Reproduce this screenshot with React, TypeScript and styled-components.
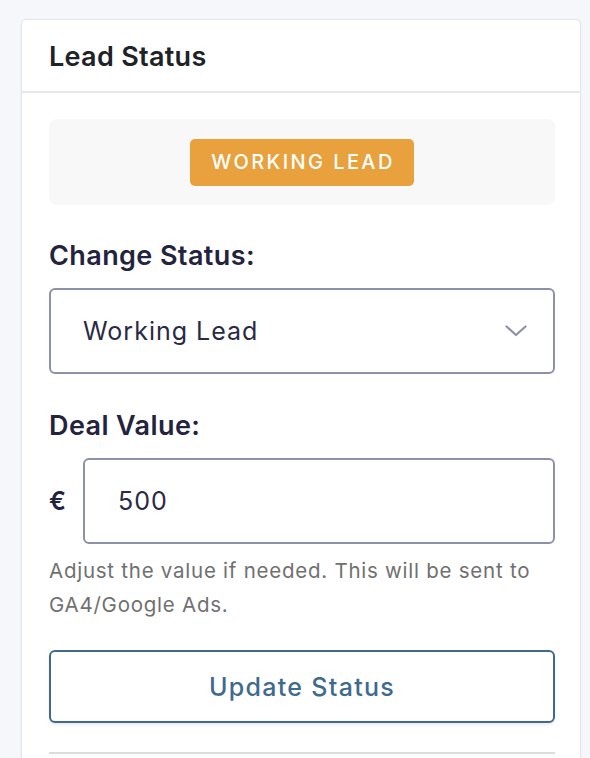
import styled, { createGlobalStyle } from "styled-components";

const GlobalStyle = createGlobalStyle`
  html, body {
    margin: 0;
    padding: 0;
    background: #f6f7fb;
    font-family: Inter, "Noto Sans", "Liberation Sans", sans-serif;
  }
`;

const Page = styled.div`
  padding: 19px 9px 0 21px;
  height: 758px;
  box-sizing: border-box;
  overflow: hidden;
`;

const Card = styled.div`
  background: #ffffff;
  border: 1px solid #e3e4ec;
  border-radius: 5px;
  box-shadow: 0 0 2px rgba(40, 44, 80, 0.06);
`;

const CardHeader = styled.div`
  height: 73px;
  display: flex;
  align-items: center;
  padding: 2px 27px 0;
  box-sizing: border-box;
  border-bottom: 2px solid #e8e9ef;
`;

const Title = styled.h2`
  margin: 0;
  font-size: 27px;
  font-weight: 600;
  color: #1d2327;
  letter-spacing: 0.3px;
`;

const CardBody = styled.div`
  padding: 26px 25px 40px 27px;
  display: flex;
  flex-direction: column;
`;

const StatusBox = styled.div`
  height: 86px;
  background: #f8f8f8;
  border-radius: 8px;
  display: flex;
  align-items: center;
  justify-content: center;
`;

const Badge = styled.span`
  display: inline-flex;
  align-items: center;
  height: 47px;
  padding: 0 19px 0 21px;
  border-radius: 5px;
  background: #e8a13c;
  color: #ffffff;
  font-size: 20px;
  font-weight: 500;
  letter-spacing: 2.4px;
  text-transform: uppercase;
`;

const Label = styled.label<{ $top: number }>`
  display: block;
  margin-top: ${(p) => p.$top}px;
  margin-bottom: 16px;
  font-size: 27px;
  line-height: 32px;
  font-weight: 600;
  color: #23233f;
  letter-spacing: 0.4px;
`;

const SelectBox = styled.div`
  height: 86px;
  box-sizing: border-box;
  border: 2px solid #8e90ab;
  border-radius: 6px;
  display: flex;
  align-items: center;
  justify-content: space-between;
  padding: 0 26px 0 32px;
  font-size: 25px;
  letter-spacing: 1px;
  color: #2a2a45;
`;

const InputRow = styled.div`
  display: flex;
  align-items: center;
  gap: 18px;
`;

const Currency = styled.span`
  width: 16px;
  font-size: 25px;
  font-weight: 600;
  color: #23233f;
`;

const ValueInput = styled.div`
  flex: 1;
  height: 86px;
  box-sizing: border-box;
  border: 2px solid #8e90ab;
  border-radius: 6px;
  display: flex;
  align-items: center;
  padding: 0 33px;
  font-size: 25px;
  letter-spacing: 1px;
  color: #2a2a45;
`;

const Help = styled.p`
  margin: 10px 0 0;
  font-size: 20.5px;
  line-height: 34px;
  letter-spacing: 0.75px;
  color: #707070;
`;

const UpdateButton = styled.button`
  margin-top: 28px;
  height: 73px;
  width: 100%;
  background: #ffffff;
  border: 2px solid #3f6a8f;
  border-radius: 6px;
  box-shadow: 0 2px 3px rgba(0, 0, 0, 0.08);
  font-family: inherit;
  font-size: 25px;
  font-weight: 500;
  letter-spacing: 1.3px;
  color: #3f6a8f;
  cursor: pointer;
`;

const Divider = styled.hr`
  margin: 29px 0 0;
  border: none;
  height: 2px;
  background: #dcdcde;
`;

function Chevron() {
  return (
    <svg width="22" height="12" viewBox="0 0 22 12" fill="none">
      <path
        d="M1.5 1.5 L11 10 L20.5 1.5"
        stroke="#8e90ab"
        strokeWidth="2.2"
        strokeLinecap="round"
        strokeLinejoin="round"
      />
    </svg>
  );
}

export default function App() {
  return (
    <>
      <GlobalStyle />
      <Page>
        <Card>
          <CardHeader>
            <Title>Lead Status</Title>
          </CardHeader>
          <CardBody>
            <StatusBox>
              <Badge>Working Lead</Badge>
            </StatusBox>
            <Label $top={35}>Change Status:</Label>
            <SelectBox>
              <span>Working Lead</span>
              <Chevron />
            </SelectBox>
            <Label $top={36}>Deal Value:</Label>
            <InputRow>
              <Currency>€</Currency>
              <ValueInput>500</ValueInput>
            </InputRow>
            <Help>
              Adjust the value if needed. This will be sent to GA4/Google Ads.
            </Help>
            <UpdateButton>Update Status</UpdateButton>
            <Divider />
          </CardBody>
        </Card>
      </Page>
    </>
  );
}
